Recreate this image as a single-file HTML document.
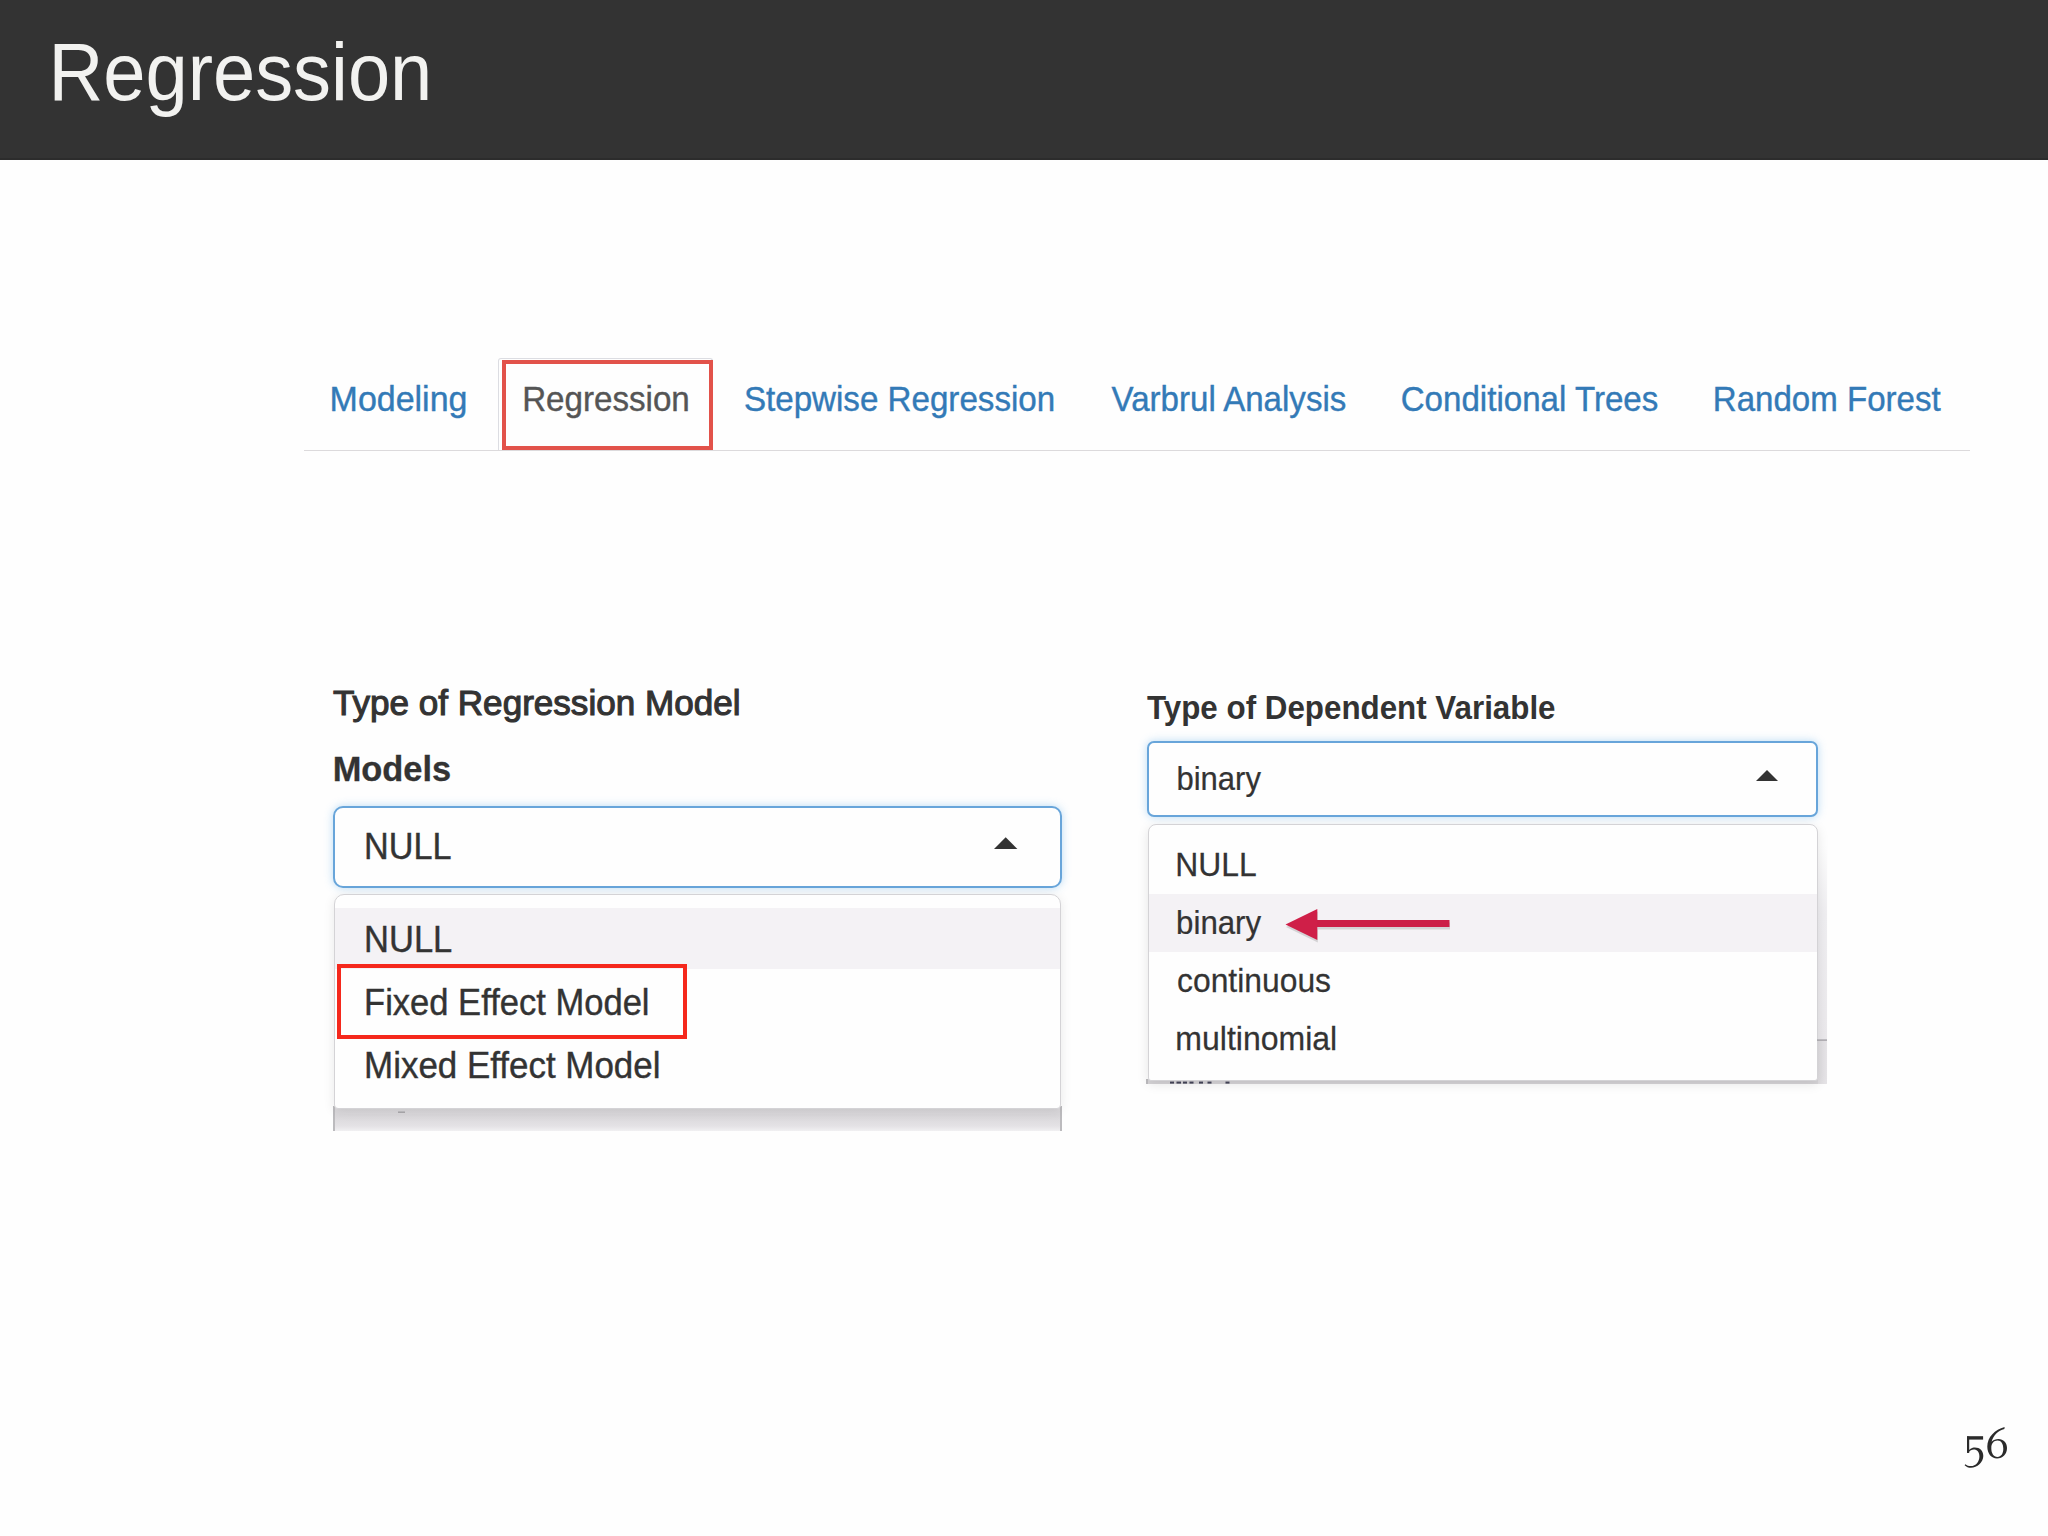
<!DOCTYPE html>
<html><head><meta charset="utf-8">
<style>
html,body{margin:0;padding:0;}
body{width:2048px;height:1536px;overflow:hidden;background:#fefefe;position:relative;font-family:"Liberation Sans",sans-serif;}
.a{position:absolute;box-sizing:border-box;}
svg{position:absolute;left:0;top:0;}
</style></head><body>
<div class="a" style="left:0;top:0;width:2048px;height:160px;background:#333333;border-bottom:2px solid #2c2c2c"></div>

<!-- tabs -->
<div class="a" style="left:304px;top:450px;width:1666px;height:1px;background:#dcdadc"></div>
<div class="a" style="left:497.5px;top:358px;width:215.5px;height:92px;background:#fefefe;border:1px solid #dcdde2;border-bottom:none;border-radius:3px 3px 0 0"></div>
<div class="a" style="left:502.3px;top:360px;width:210.7px;height:90px;border:4.5px solid #e2524a"></div>

<!-- select 1 -->
<div class="a" style="left:333px;top:805.5px;width:728.5px;height:82.5px;background:#fefefe;border:2.6px solid #68a5da;border-radius:10px;box-shadow:0 0 9px rgba(102,175,233,.45)"></div>

<!-- under-menu gray band 1 -->
<div class="a" style="left:333px;top:1106px;width:728.5px;height:25px;background:linear-gradient(#d9d7da 0%,#dad8db 40%,#e4e2e5 80%,#f1f0f2 100%);border-left:2px solid #bcbbbe;border-right:2px solid #bcbbbe"></div>
<!-- menu 1 -->
<div class="a" style="left:334px;top:894px;width:726.5px;height:215px;background:#fefefe;border:1px solid #d4d3d6;border-radius:10px 10px 4px 4px;box-shadow:0 2px 12px rgba(0,0,0,.09);overflow:hidden">
  <div class="a" style="left:0;top:13px;width:100%;height:61px;background:#f4f2f5"></div>
</div>
<div class="a" style="left:337px;top:964px;width:350px;height:74.5px;border:4px solid #f5281c"></div>

<!-- select 2 -->
<div class="a" style="left:1147px;top:741.3px;width:671px;height:75.4px;background:#fefefe;border:2px solid #68a5da;border-radius:7px;box-shadow:0 0 8px rgba(102,175,233,.45)"></div>

<!-- gray strip right of menu 2 -->
<div class="a" style="left:1817px;top:845px;width:10px;height:195px;background:linear-gradient(rgba(236,234,237,0),#efeef1 35%,#ebe9ec)"></div>
<div class="a" style="left:1816px;top:1040px;width:11px;height:44px;background:linear-gradient(90deg,#dedcdf,#e6e4e7)"></div>
<div class="a" style="left:1146px;top:1079px;width:672px;height:5px;background:#d6d4d7;border-left:2px solid #bcbbbe"></div>
<!-- menu 2 -->
<div class="a" style="left:1147.5px;top:823.5px;width:670px;height:257px;background:#fefefe;border:1px solid #d4d3d6;border-radius:8px 8px 3px 3px;box-shadow:0 3px 12px rgba(0,0,0,.10);overflow:hidden">
  <div class="a" style="left:0;top:69.5px;width:100%;height:58px;background:#f4f2f5"></div>
</div>

<svg width="2048" height="1536" viewBox="0 0 2048 1536" font-family="Liberation Sans">
<text transform="translate(48.47 99.5) scale(0.9323 1)" font-size="81.4" font-weight="400" fill="#f2f2f0">Regression</text>
<text transform="translate(329.58 411) scale(0.9745 1)" font-size="34.88" font-weight="400" fill="#337ab7" stroke="#337ab7" stroke-width="0.4">Modeling</text>
<text transform="translate(522.15 411) scale(0.9503 1)" font-size="34.88" font-weight="400" fill="#555555" stroke="#555555" stroke-width="0.4">Regression</text>
<text transform="translate(743.9 411) scale(0.9503 1)" font-size="34.88" font-weight="400" fill="#337ab7" stroke="#337ab7" stroke-width="0.4">Stepwise Regression</text>
<text transform="translate(1111.6 411) scale(0.9488 1)" font-size="34.88" font-weight="400" fill="#337ab7" stroke="#337ab7" stroke-width="0.4">Varbrul Analysis</text>
<text transform="translate(1400.7 411) scale(0.9493 1)" font-size="34.88" font-weight="400" fill="#337ab7" stroke="#337ab7" stroke-width="0.4">Conditional Trees</text>
<text transform="translate(1712.86 411) scale(0.9479 1)" font-size="34.88" font-weight="400" fill="#337ab7" stroke="#337ab7" stroke-width="0.4">Random Forest</text>
<text transform="translate(333.0 715) scale(1.0062 1)" font-size="34.88" font-weight="400" fill="#333333" stroke="#333333" stroke-width="1.1">Type of Regression Model</text>
<text transform="translate(332.63 780.7) scale(0.9863 1)" font-size="34.88" font-weight="700" fill="#333333" stroke="#333333" stroke-width="0.3">Models</text>
<text transform="translate(364.07 858.75) scale(0.9449 1)" font-size="36.2" font-weight="400" fill="#333333" stroke="#333333" stroke-width="0.4">NULL</text>
<text transform="translate(364.04 951.5) scale(0.9539 1)" font-size="36.2" font-weight="400" fill="#333333" stroke="#333333" stroke-width="0.4">NULL</text>
<text transform="translate(364.04 1014.5) scale(0.9548 1)" font-size="36.2" font-weight="400" fill="#333333" stroke="#333333" stroke-width="0.4">Fixed Effect Model</text>
<text transform="translate(364.1 1077.8) scale(0.9652 1)" font-size="36.2" font-weight="400" fill="#333333" stroke="#333333" stroke-width="0.4">Mixed Effect Model</text>
<text transform="translate(1147.0 718.6) scale(0.9539 1)" font-size="32.85" font-weight="700" fill="#333333">Type of Dependent Variable</text>
<text transform="translate(1176.42 790) scale(0.9375 1)" font-size="33.1" font-weight="400" fill="#333333" stroke="#333333" stroke-width="0.25">binary</text>
<text transform="translate(1175.21 875.6) scale(0.9617 1)" font-size="33.1" font-weight="400" fill="#333333" stroke="#333333" stroke-width="0.25">NULL</text>
<text transform="translate(1176.11 933.5) scale(0.9432 1)" font-size="33.1" font-weight="400" fill="#333333" stroke="#333333" stroke-width="0.25">binary</text>
<text transform="translate(1177.04 991.5) scale(0.962 1)" font-size="33.1" font-weight="400" fill="#333333" stroke="#333333" stroke-width="0.25">continuous</text>
<text transform="translate(1175.37 1049.6) scale(0.9675 1)" font-size="33.1" font-weight="400" fill="#333333" stroke="#333333" stroke-width="0.25">multinomial</text>
<polygon points="994,849 1017.4,849 1005.7,837.3" fill="#333"/>
<polygon points="1756,781 1778,781 1767,770" fill="#333"/>
<!-- arrow -->
<g opacity="0.25" transform="translate(0.5 2.5)"><polygon points="1285.5,924.5 1317.3,909 1317.3,940" fill="#777"/><rect x="1317" y="920" width="132.5" height="7" fill="#777"/></g>
<polygon points="1285.5,924.5 1317.3,909 1317.3,940" fill="#cf1f48"/>
<rect x="1317" y="920" width="132.5" height="7" fill="#cc1e47"/>
<!-- tiny artifacts -->
<rect x="1817" y="1039.3" width="10" height="1.6" fill="#9d9ba0" opacity="0.8"/>
<rect x="398" y="1111.5" width="7" height="1.4" fill="#8a898c" opacity="0.7"/>
<g fill="#2a2a40" opacity="0.85">
<rect x="1170" y="1081.6" width="4" height="2"/><rect x="1176.5" y="1081.6" width="4.5" height="2"/><rect x="1183" y="1081.6" width="4" height="2"/><rect x="1189.5" y="1081.6" width="4" height="2"/><rect x="1199" y="1081.6" width="4" height="2"/><rect x="1207.5" y="1081.6" width="4" height="2"/><rect x="1225.5" y="1081.6" width="4" height="2"/>
</g>
<!-- page number -->
<g fill="#2b2b2b">
<rect x="1967" y="1436.2" width="16.1" height="3.4"/>
<rect x="1967" y="1436.5" width="2.2" height="16.4"/>
<path d="M1967.1,1452.9 C1969,1449 1972,1447.6 1974.8,1447.6 C1980,1447.6 1983.3,1451 1983.3,1456 C1983.3,1462.5 1977,1467.8 1971,1467.8 C1968.5,1467.8 1966.3,1466.8 1964.6,1465.2 L1965.3,1464.2 C1966.8,1465.4 1968.8,1466.1 1970.8,1466.1 C1976,1466.1 1979.4,1461.5 1979.4,1456.5 C1979.4,1452 1977,1449.6 1973.8,1449.6 C1971.8,1449.6 1970,1450.5 1968.6,1452.4 Z"/>
<path fill-rule="evenodd" d="M2004.6,1426.9 C1995,1429.3 1987.3,1437 1987.3,1446.5 C1987.3,1453.5 1991.3,1458.5 1997,1458.5 C2002.8,1458.5 2007,1454 2007,1448 C2007,1442.5 2003.3,1439 1998.5,1439 C1995.8,1439 1993.3,1440 1991.6,1441.8 C1993.5,1435 1998,1430.5 2004.4,1429 Z M1997.5,1440.6 C2001.2,1440.6 2003.3,1444 2003.3,1448.7 C2003.3,1453.5 2001,1456.9 1997.5,1456.9 C1993.5,1456.9 1991.3,1453 1991.3,1448.2 C1991.3,1443.3 1994,1440.6 1997.5,1440.6 Z"/>
</g>
</svg>
</body></html>
